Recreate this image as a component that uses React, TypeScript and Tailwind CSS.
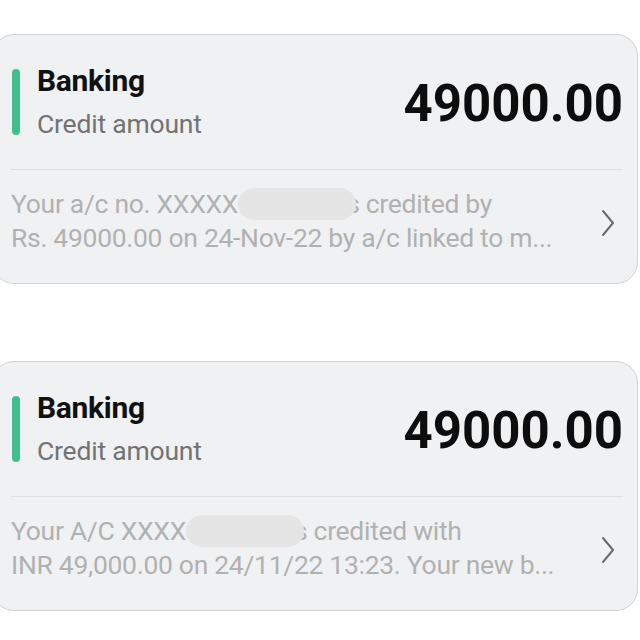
import React from 'react';

interface Message {
  before: string;
  after: string;
  line2: string;
}

const messages: Message[] = [
  {
    before: 'Your a/c no. XXXXX',
    after: 's credited by',
    line2: 'Rs. 49000.00 on 24-Nov-22 by a/c linked to m...',
  },
  {
    before: 'Your A/C XXXX',
    after: 's credited with',
    line2: 'INR 49,000.00 on 24/11/22 13:23. Your new b...',
  },
];

function Chevron() {
  return (
    <svg width="16" height="28" viewBox="0 0 16 28" fill="none" className="shrink-0">
      <polyline points="3,2 13,14 3,26" stroke="#6b6b6b" strokeWidth="2" strokeLinecap="round" strokeLinejoin="round" />
    </svg>
  );
}

function SmsCard({ msg }: { msg: Message }) {
  return (
    <div className="ml-[-8px] mr-[2px] h-[250px] rounded-[22px] border-[1.5px] border-[#d2d3d5] bg-[#f0f1f3]">
      {/* header */}
      <div className="h-[134px] flex items-center pl-[19px] pr-[14px]">
        <div className="w-[8px] h-[66px] rounded-full bg-[#3fbf8c]" />
        <div className="ml-[17px] flex flex-col">
          <span className="text-[30px] leading-[36px] font-bold text-[#111] tracking-[-0.3px]">Banking</span>
          <span className="text-[26.5px] leading-[34px] text-[#737373] mt-[8px] tracking-[-0.2px]">Credit amount</span>
        </div>
        <div className="ml-auto text-[51px] leading-none font-bold text-[#0d0d0d] mt-[2px]">49000.00</div>
      </div>

      <div className="ml-[18px] mr-[14px] h-[1px] bg-[#dedfe1]" />

      {/* body */}
      <div className="h-[114px] flex items-center pl-[18px] pr-[21px] pb-[12px]">
        <div className="flex flex-col text-[26.5px] leading-[34px] text-[#b1b1b1] tracking-[-0.3px]">
          <div className="flex items-center whitespace-nowrap">
            <span>{msg.before}</span>
            <span className="w-[118px] h-[32px] rounded-full bg-[#e5e5e6] -mr-[10px] relative z-10" />
            <span>{msg.after}</span>
          </div>
          <div className="whitespace-nowrap">{msg.line2}</div>
        </div>
        <div className="ml-auto mt-[4px]">
          <Chevron />
        </div>
      </div>
    </div>
  );
}

export default function App() {
  return (
    <div className="w-[640px] h-[640px] overflow-hidden bg-white pt-[34px]" style={{ fontFamily: 'Roboto, "Noto Sans", sans-serif' }}>
      <SmsCard msg={messages[0]} />
      <div className="h-[77px]" />
      <SmsCard msg={messages[1]} />
    </div>
  );
}
